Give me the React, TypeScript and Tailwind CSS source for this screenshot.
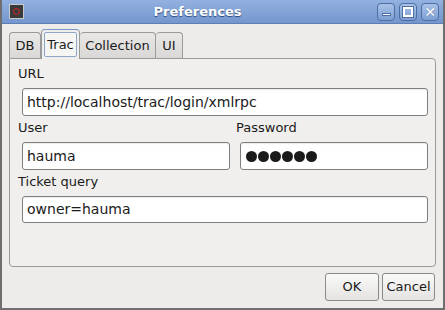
import React from 'react';

const font = { fontFamily: '"DejaVu Sans", sans-serif' };

function Field({ value, password, h = 28 }: { value: string; password?: boolean; h?: number }) {
  return (
    <div
      className={`${h === 28 ? 'h-[28px]' : 'h-[27px]'} bg-white border border-[#7f7f7f] rounded-[3px] flex items-center px-[4px] text-[14px] text-[#1a1a1a] shadow-[inset_0_1px_1px_rgba(0,0,0,0.08)]`}
    >
      {password ? (
        <span className="flex gap-[1px] pl-[1px]">
          {Array.from({ length: 6 }).map((_, i) => (
            <span key={i} className="w-[11px] h-[11px] rounded-full bg-[#1a1a1a]" />
          ))}
        </span>
      ) : (
        value
      )}
    </div>
  );
}

function WinButton({ children }: { children: React.ReactNode }) {
  return (
    <div className="w-[18px] h-[18px] rounded-[4px] border border-[#4e6fa3] bg-gradient-to-b from-[#a9c2e8] to-[#7e9fd3] flex items-center justify-center">
      {children}
    </div>
  );
}

function Label({ children }: { children: React.ReactNode }) {
  return <div className="h-[22px] flex items-center -ml-[4px] mb-[3px]">{children}</div>;
}

export default function App() {
  return (
    <div className="w-[445px] h-[310px] flex flex-col bg-[#edecea] border-x-2 border-b-2 border-[#6f6f6f] overflow-hidden" style={font}>
      {/* title bar */}
      <div className="h-[24px] shrink-0 relative flex items-center px-[7px] bg-gradient-to-b from-[#93b1e0] to-[#7396cd] border-b border-[#5f7fb4] rounded-t-[4px] -mx-[2px]">
        <div className="w-[15px] h-[15px] bg-[#c9c9c9] p-[1px] ml-[2px]">
          <div className="w-full h-full bg-[#3a3a3a] flex items-center justify-center">
            <div className="w-[7px] h-[7px] rounded-full border border-[#d22]" />
          </div>
        </div>
        <div className="absolute inset-0 pr-[50px] flex items-center justify-center text-white font-bold text-[13px] [text-shadow:0_1px_1px_#2f4a78]">
          Preferences
        </div>
        <div className="ml-auto flex gap-[4px] mr-[-1px]">
          <WinButton>
            <div className="w-[9px] h-[3px] bg-white border border-[#4e6fa3] mt-[6px]" />
          </WinButton>
          <WinButton>
            <div className="w-[10px] h-[10px] border-2 border-white outline outline-1 outline-[#4e6fa3]" />
          </WinButton>
          <WinButton>
            <span className="text-white text-[14px] font-bold leading-none [text-shadow:0_0_1px_#4e6fa3]">✕</span>
          </WinButton>
        </div>
      </div>

      {/* content */}
      <div className="flex-1 flex flex-col px-[7px] pt-[5px] pb-[7px]">
        {/* tabs */}
        <div className="flex items-end h-[29px] text-[13px] text-[#1a1a1a]">
          <div className="h-[26px] w-[32px] justify-center flex items-center border border-b-0 border-[#9a9a9a] rounded-t-[4px] bg-gradient-to-b from-[#e9e8e6] to-[#d9d8d6]">DB</div>
          <div className="h-[30px] w-[39px] px-[2px] pt-[2px] pb-[2px] flex flex-col border border-b-0 border-[#9a9a9a] border-t-[#7598c9] rounded-t-[4px] bg-[#f0efed] -mb-[1px] relative z-10">
            <div className="flex-1 flex items-center justify-center border border-[#8fa6c9] rounded-[2px] bg-[#f5f5f4] leading-none">Trac</div>
          </div>
          <div className="h-[26px] w-[76px] flex items-center justify-center border border-b-0 border-l-0 border-[#9a9a9a] rounded-t-[4px] bg-gradient-to-b from-[#e9e8e6] to-[#d9d8d6]">Collection</div>
          <div className="h-[26px] w-[27px] flex items-center justify-center border border-b-0 border-l-0 border-[#9a9a9a] rounded-t-[4px] bg-gradient-to-b from-[#e9e8e6] to-[#d9d8d6]">UI</div>
        </div>

        {/* panel */}
        <div className="h-[209px] border border-[#9a9a9a] rounded-b-[4px] rounded-tr-[4px] bg-[#f0efed] pl-[12px] pr-[7px] pt-[4px] flex flex-col text-[13px] text-[#1a1a1a]">
          <Label>URL</Label>
          <Field value="http://localhost/trac/login/xmlrpc" />
          <div className="grid grid-cols-[208px_1fr] gap-[10px] mt-[1px]">
            <div className="flex flex-col">
              <Label>User</Label>
              <Field value="hauma" />
            </div>
            <div className="flex flex-col">
              <Label>Password</Label>
              <Field value="" password />
            </div>
          </div>
          <div className="mt-[1px]">
            <Label>Ticket query</Label>
          </div>
          <Field value="owner=hauma" h={27} />
        </div>

        {/* buttons */}
        <div className="flex justify-end gap-[3px] mt-[6px] mr-[1px] text-[13px] text-[#1a1a1a]">
          <button className="w-[54px] h-[28px] border border-[#8a8a8a] rounded-[3px] bg-gradient-to-b from-[#fafaf9] to-[#e4e3e1]">OK</button>
          <button className="w-[53px] h-[28px] border border-[#8a8a8a] rounded-[3px] bg-gradient-to-b from-[#fafaf9] to-[#e4e3e1]">Cancel</button>
        </div>
      </div>
    </div>
  );
}
